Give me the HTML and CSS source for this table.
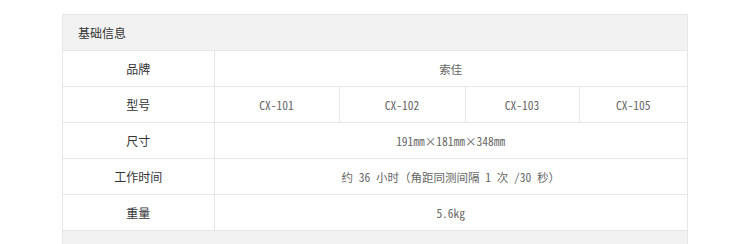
FILE: index.html
```html
<!DOCTYPE html>
<html lang="zh-CN">
<head>
<meta charset="utf-8">
<link rel="stylesheet" href="styles.css">
</head>
<body>
<div class="page">
  <div class="panel">
    <div class="panel-title">基础信息</div>
    <table class="spec">
      <colgroup>
        <col class="c-label"><col class="c-a"><col class="c-b"><col class="c-c"><col class="c-d">
      </colgroup>
      <tbody>
        <tr><th>品牌</th><td colspan="4">索佳</td></tr>
        <tr><th>型号</th><td>CX-101</td><td>CX-102</td><td>CX-103</td><td>CX-105</td></tr>
        <tr><th>尺寸</th><td colspan="4">191㎜×181㎜×348㎜</td></tr>
        <tr><th>工作时间</th><td colspan="4">约 36 小时（角距同测间隔 1 次 /30 秒）</td></tr>
        <tr><th>重量</th><td colspan="4">5.6kg</td></tr>
      </tbody>
    </table>
    <div class="panel-foot"></div>
  </div>
</div>
</body>
</html>
```
FILE: styles.css
```css
html, body {
  margin: 0;
  padding: 0;
  background: #ffffff;
}
body {
  font-family: "Noto Sans CJK SC", "DejaVu Sans", sans-serif;
  font-size: 12px;
  color: #333;
}
.page {
  padding: 14px 0 0 62px;
}
.panel {
  width: 626px;
  box-sizing: border-box;
  border: 1px solid #e6e6e6;
  border-bottom: none;
}
.panel-title {
  height: 35px;
  line-height: 35px;
  padding-left: 15px;
  background: #f2f2f2;
  border-bottom: 1px solid #e6e6e6;
  color: #333;
}
.spec {
  width: 100%;
  border-collapse: collapse;
  table-layout: fixed;
}
.c-label { width: 151px; }
.c-a { width: 125px; }
.c-b { width: 126px; }
.c-c { width: 114px; }
.c-d { width: 108px; }
.spec th, .spec td {
  height: 35px;
  padding: 0;
  text-align: center;
  border-bottom: 1px solid #e6e6e6;
  font-weight: normal;
}
.spec th {
  color: #333;
  border-right: 1px solid #e6e6e6;
}
.spec td {
  color: #666;
  border-left: 1px solid #e6e6e6;
  font-family: "Noto Sans Mono CJK SC", "Noto Sans CJK SC", "DejaVu Sans Mono", monospace;
  font-size: 11.5px;
}
.spec tr td:first-of-type { border-left: none; }
.panel-foot {
  height: 14px;
  background: #f2f2f2;
}
```
